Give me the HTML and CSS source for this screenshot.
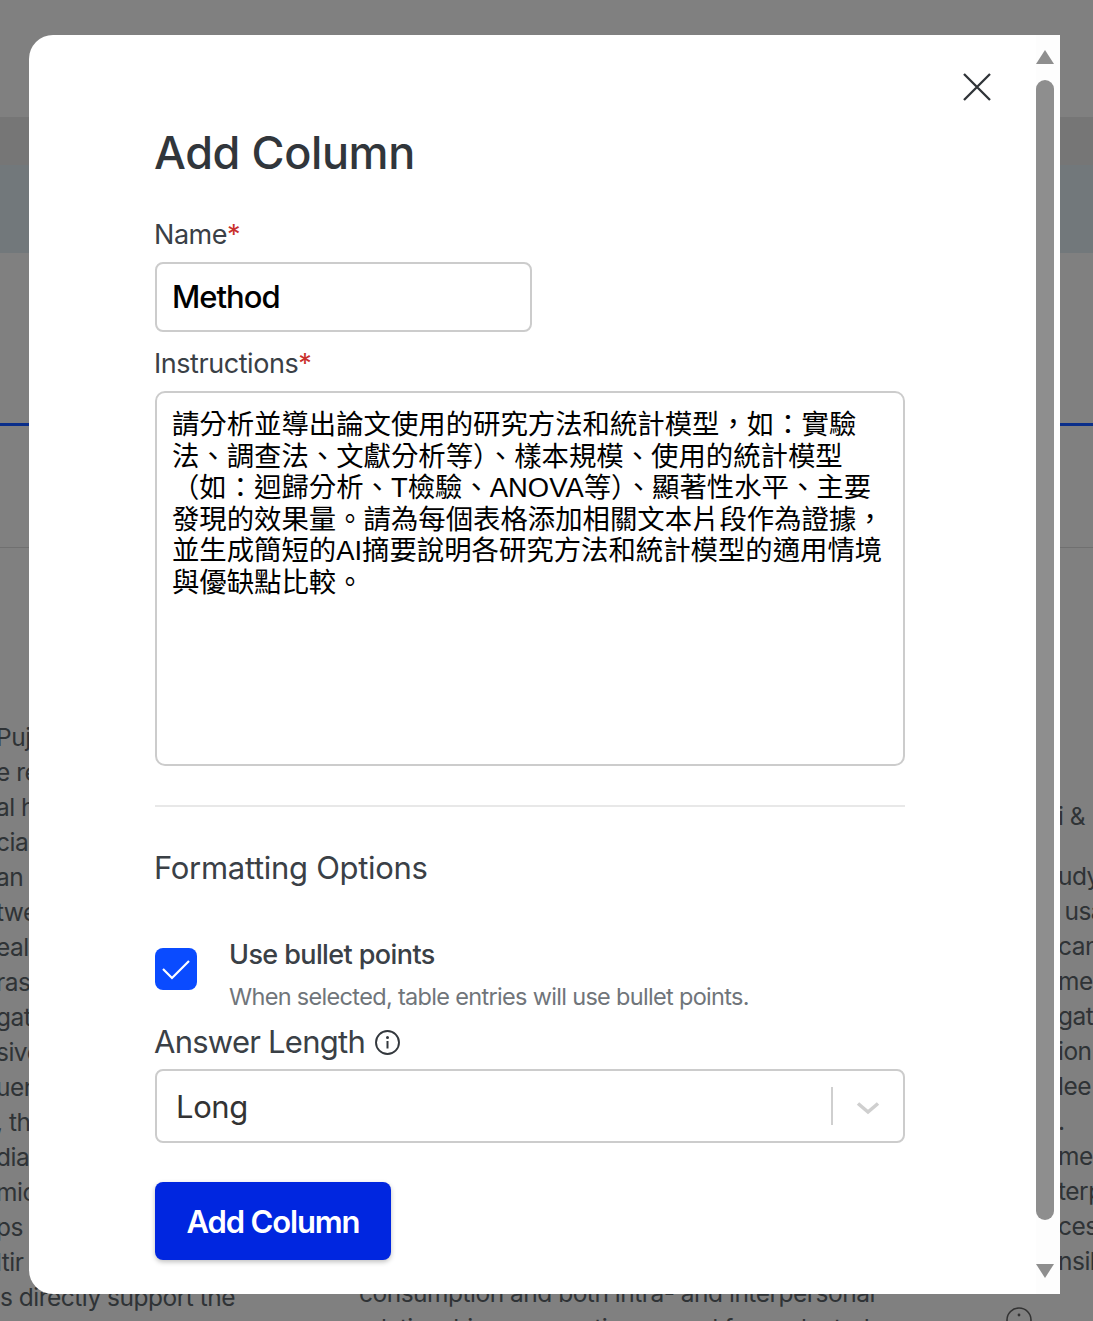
FILE: index.html
```html
<!DOCTYPE html>
<html lang="zh-Hant">
<head>
<meta charset="utf-8">
<title>Add Column</title>
<link rel="stylesheet" href="styles.css">
</head>
<body>
<div class="page">
  <div class="backdrop">
    <div class="band-top"></div>
    <div class="band-dark"></div>
    <div class="band-blue"></div>
    <div class="tab-space"></div>
    <div class="tab-line"></div>
    <div class="head-space"></div>
    <div class="head-line"></div>
    <div class="columns">
      <div class="col-left">
        <div>Puj</div><div>e re</div><div>al h</div><div>cia</div><div>an</div><div>twe</div><div>eal</div><div>ras</div><div>gat</div><div>sive</div><div>uen</div><div>, th</div><div>dia</div><div>mic</div><div>ps</div><div>ltir</div><div class="last">s directly support the</div>
      </div>
      <div class="col-mid">
        <div>consumption and both intra- and interpersonal</div>
        <div>relationships, suggesting a need for evaluated</div>
      </div>
      <div class="col-right">
        <div>i &amp;</div><div class="gap">udy</div><div>&nbsp;usa</div><div>can</div><div>mes</div><div>gat</div><div>ion</div><div>lee</div><div>.</div><div>me</div><div>terp</div><div>ces</div><div>nsib</div>
      </div>
    </div>
    <svg class="bg-info" width="26" height="26" viewBox="0 0 26 26"><circle cx="13" cy="13" r="12" fill="none" stroke="#333" stroke-width="1.6"/><circle cx="13" cy="8" r="1.4" fill="#333"/></svg>
  </div>
  <div class="modal">
    <div class="content">
      <button class="close" aria-label="Close">
        <svg width="30" height="30" viewBox="0 0 30 30"><path d="M2 2 L28 28 M28 2 L2 28" fill="none" stroke="#2f3338" stroke-width="2.3"/></svg>
      </button>
      <h1 class="title">Add Column</h1>
      <div class="label">Name<span class="req">*</span></div>
      <div class="input">Method</div>
      <div class="label label-second">Instructions<span class="req">*</span></div>
      <div class="textarea">請分析並導出論文使用的研究方法和統計模型，如：實驗<br>法、調查法、文獻分析等）、樣本規模、使用的統計模型<br>（如：迴歸分析、T檢驗、ANOVA等）、顯著性水平、主要<br>發現的效果量。請為每個表格添加相關文本片段作為證據，<br>並生成簡短的AI摘要說明各研究方法和統計模型的適用情境<br>與優缺點比較。</div>
      <hr class="rule">
      <h2 class="subtitle">Formatting Options</h2>
      <div class="check-row">
        <div class="checkbox">
          <svg width="30" height="24" viewBox="0 0 30 24"><path d="M2 12 L11 21 L28 4" fill="none" stroke="#fff" stroke-width="2.2"/></svg>
        </div>
        <div class="check-text">
          <div class="check-title">Use bullet points</div>
          <div class="check-desc">When selected, table entries will use bullet points.</div>
        </div>
      </div>
      <div class="length-label">Answer Length
        <svg width="27" height="27" viewBox="0 0 27 27"><circle cx="13.5" cy="13.5" r="11.5" fill="none" stroke="#33383d" stroke-width="1.9"/><circle cx="13.5" cy="8.4" r="1.5" fill="#33383d"/><path d="M13.5 12 V19.5" stroke="#33383d" stroke-width="2"/></svg>
      </div>
      <div class="select">
        <div class="select-value">Long</div>
        <div class="select-sep"></div>
        <svg class="chevron" width="24" height="14" viewBox="0 0 24 14"><path d="M2 2.5 L12 11 L22 2.5" fill="none" stroke="#cfcfcf" stroke-width="3.6"/></svg>
      </div>
      <button class="submit">Add Column</button>
    </div>
    <div class="scrollbar">
      <div class="arrow-up"></div>
      <div class="thumb"></div>
      <div class="arrow-down"></div>
    </div>
  </div>
</div>
</body>
</html>
```
FILE: styles.css
```css
* { box-sizing: border-box; }
html, body { margin: 0; padding: 0; }
body { font-family: Inter, "Noto Sans CJK TC", sans-serif; }
.page { position: relative; width: 1093px; height: 1321px; overflow: hidden; background: #808080; }
.backdrop { position: relative; height: 1321px; overflow: hidden; color: #2f3336; font-size: 24.5px; letter-spacing: -0.5px; }
.band-top { height: 117px; background: #808080; }
.band-dark { height: 48px; background: #767676; }
.band-blue { height: 88px; background: #72787b; }
.tab-space { height: 170px; }
.tab-line { height: 3px; background: #0a2e8a; }
.head-space { height: 121px; }
.head-line { height: 1px; background: #707070; }
.columns { display: flex; padding-top: 172px; height: 800px; }
.col-left { flex: 0 0 363px; margin-left: -4px; line-height: 35px; white-space: nowrap; }
.col-left .last { margin-left: 4px; }
.col-mid { flex: 0 0 699px; line-height: 35px; padding-top: 556px; white-space: nowrap; }
.col-right { flex: 0 0 42px; line-height: 35px; padding-top: 79px; white-space: nowrap; }
.col-right .gap { margin-top: 25px; }
.bg-info { position: absolute; left: 1006px; top: 1307px; }
.modal { position: absolute; left: 29px; top: 35px; width: 1031px; height: 1259px; background: #fff; border-radius: 24px 0 0 24px; display: flex; overflow: hidden; }
.content { position: relative; flex: 1; padding: 87px 131px 0 126px; color: #31363b; }
.close { position: absolute; right: 44px; top: 37px; width: 30px; height: 30px; padding: 0; border: 0; background: none; display: block; }
.close svg { display: block; }
.title { margin: 0 0 0 -1px; font-size: 45px; line-height: 62px; font-weight: 500; letter-spacing: -0.4px; }
.label { margin: 33px 0 0 -1px; font-size: 27px; line-height: 36px; font-weight: 400; letter-spacing: -0.45px; color: #3a4046; }
.label-second { margin-top: 14px; }
.req { color: #c9302c; }
.input { width: 377px; height: 70px; margin-top: 9px; padding: 0 15px; border: 2px solid #cccccc; border-radius: 8px; font-size: 31px; line-height: 66px; font-weight: 500; letter-spacing: -1px; color: #000; }
.textarea { height: 375px; margin-top: 9px; padding: 16px 15px; border: 2px solid #cccccc; border-radius: 10px; font-family: "Liberation Sans", "Noto Sans CJK TC", sans-serif; font-size: 27.38px; line-height: 31.6px; color: #000; white-space: nowrap; }
.rule { height: 2px; margin: 39px 0 0; border: 0; background: #e8e8e8; }
.subtitle { margin: 38px 0 0 -1px; font-size: 31px; line-height: 46px; font-weight: 400; letter-spacing: -0.3px; color: #3a4046; }
.check-row { display: flex; margin-top: 44px; }
.checkbox { width: 42px; height: 42px; margin-top: 13px; border-radius: 8px; background: #0a4bff; display: flex; align-items: center; justify-content: center; }
.check-text { margin-left: 32px; }
.check-title { font-size: 27px; line-height: 40px; font-weight: 500; letter-spacing: -0.6px; color: #3a4046; }
.check-desc { margin-top: 3px; font-size: 23.5px; line-height: 38px; letter-spacing: -0.68px; color: #70757a; }
.length-label { display: flex; align-items: center; gap: 9px; margin: 3px 0 0 -1px; font-size: 31px; line-height: 46px; letter-spacing: -0.75px; color: #3a4046; }
.select { display: flex; align-items: center; height: 74px; margin-top: 4px; padding-left: 19px; border: 2px solid #cccccc; border-radius: 8px; }
.select-value { flex: 1; font-size: 31px; letter-spacing: -0.4px; color: #333; }
.select-sep { width: 2px; height: 38px; background: #cfcfcf; }
.chevron { margin: 3px 23px 0 23px; }
.submit { display: block; width: 236px; height: 78px; margin-top: 39px; padding: 0; border: 0; border-radius: 8px; background: #0026e0; color: #fff; font-family: Inter, sans-serif; font-size: 31px; font-weight: 600; letter-spacing: -1.15px; box-shadow: 0 2px 5px rgba(0,0,0,.25); }
.scrollbar { width: 24px; background: #fdfdfd; display: flex; flex-direction: column; align-items: center; padding: 15px 6px 16px 0; }
.arrow-up { width: 0; height: 0; border-left: 9px solid transparent; border-right: 9px solid transparent; border-bottom: 14px solid #8e8e8e; }
.thumb { flex: 1; width: 18px; margin: 16px 0 44px; background: #8e8e8e; border-radius: 9px; }
.arrow-down { width: 0; height: 0; border-left: 9px solid transparent; border-right: 9px solid transparent; border-top: 14px solid #8e8e8e; }
```
